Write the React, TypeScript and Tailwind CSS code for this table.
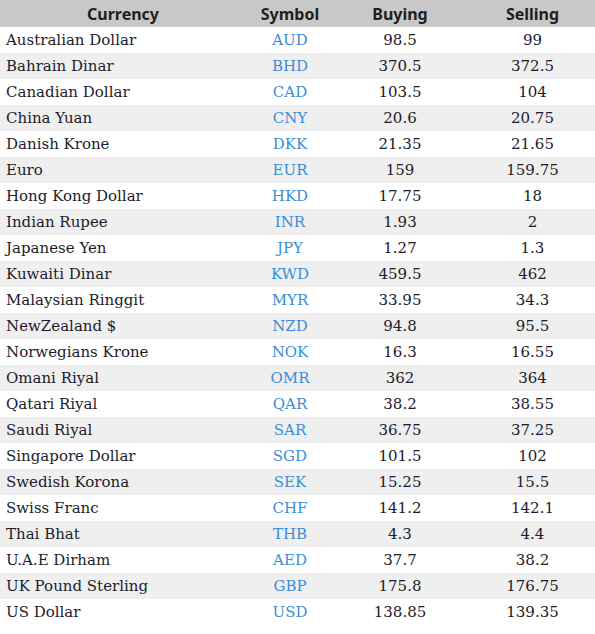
const rates = [
  ["Australian Dollar", "AUD", "98.5", "99"],
  ["Bahrain Dinar", "BHD", "370.5", "372.5"],
  ["Canadian Dollar", "CAD", "103.5", "104"],
  ["China Yuan", "CNY", "20.6", "20.75"],
  ["Danish Krone", "DKK", "21.35", "21.65"],
  ["Euro", "EUR", "159", "159.75"],
  ["Hong Kong Dollar", "HKD", "17.75", "18"],
  ["Indian Rupee", "INR", "1.93", "2"],
  ["Japanese Yen", "JPY", "1.27", "1.3"],
  ["Kuwaiti Dinar", "KWD", "459.5", "462"],
  ["Malaysian Ringgit", "MYR", "33.95", "34.3"],
  ["NewZealand $", "NZD", "94.8", "95.5"],
  ["Norwegians Krone", "NOK", "16.3", "16.55"],
  ["Omani Riyal", "OMR", "362", "364"],
  ["Qatari Riyal", "QAR", "38.2", "38.55"],
  ["Saudi Riyal", "SAR", "36.75", "37.25"],
  ["Singapore Dollar", "SGD", "101.5", "102"],
  ["Swedish Korona", "SEK", "15.25", "15.5"],
  ["Swiss Franc", "CHF", "141.2", "142.1"],
  ["Thai Bhat", "THB", "4.3", "4.4"],
  ["U.A.E Dirham", "AED", "37.7", "38.2"],
  ["UK Pound Sterling", "GBP", "175.8", "176.75"],
  ["US Dollar", "USD", "138.85", "139.35"],
];

export default function App() {
  return (
    <div className="h-[634px] w-[595px] bg-white">
      <table className="w-[595px] table-fixed border-collapse">
        <colgroup>
          <col className="w-[246px]" />
          <col className="w-[88px]" />
          <col className="w-[132px]" />
          <col className="w-[129px]" />
        </colgroup>
        <thead>
          <tr className="h-[27px] bg-[#c8c8c8] font-['Noto_Sans',sans-serif] text-[16px] font-bold text-[#1f1f1f]">
            <th className="p-0 text-center">Currency</th>
            <th className="p-0 text-center">Symbol</th>
            <th className="p-0 text-center">Buying</th>
            <th className="p-0 pl-1 text-center">Selling</th>
          </tr>
        </thead>
        <tbody className="font-['DejaVu_Serif',serif] text-[15px] text-[#1c1c2a]">
          {rates.map(([name, sym, buy, sell], i) => (
            <tr key={sym} className={`h-[26px] ${i % 2 ? "bg-[#efefef]" : "bg-white"}`}>
              <td className="p-0 pl-[6px]">{name}</td>
              <td className="p-0 text-center text-[#3a8dd6]">{sym}</td>
              <td className="p-0 text-center">{buy}</td>
              <td className="p-0 pl-1 text-center">{sell}</td>
            </tr>
          ))}
        </tbody>
      </table>
    </div>
  );
}
